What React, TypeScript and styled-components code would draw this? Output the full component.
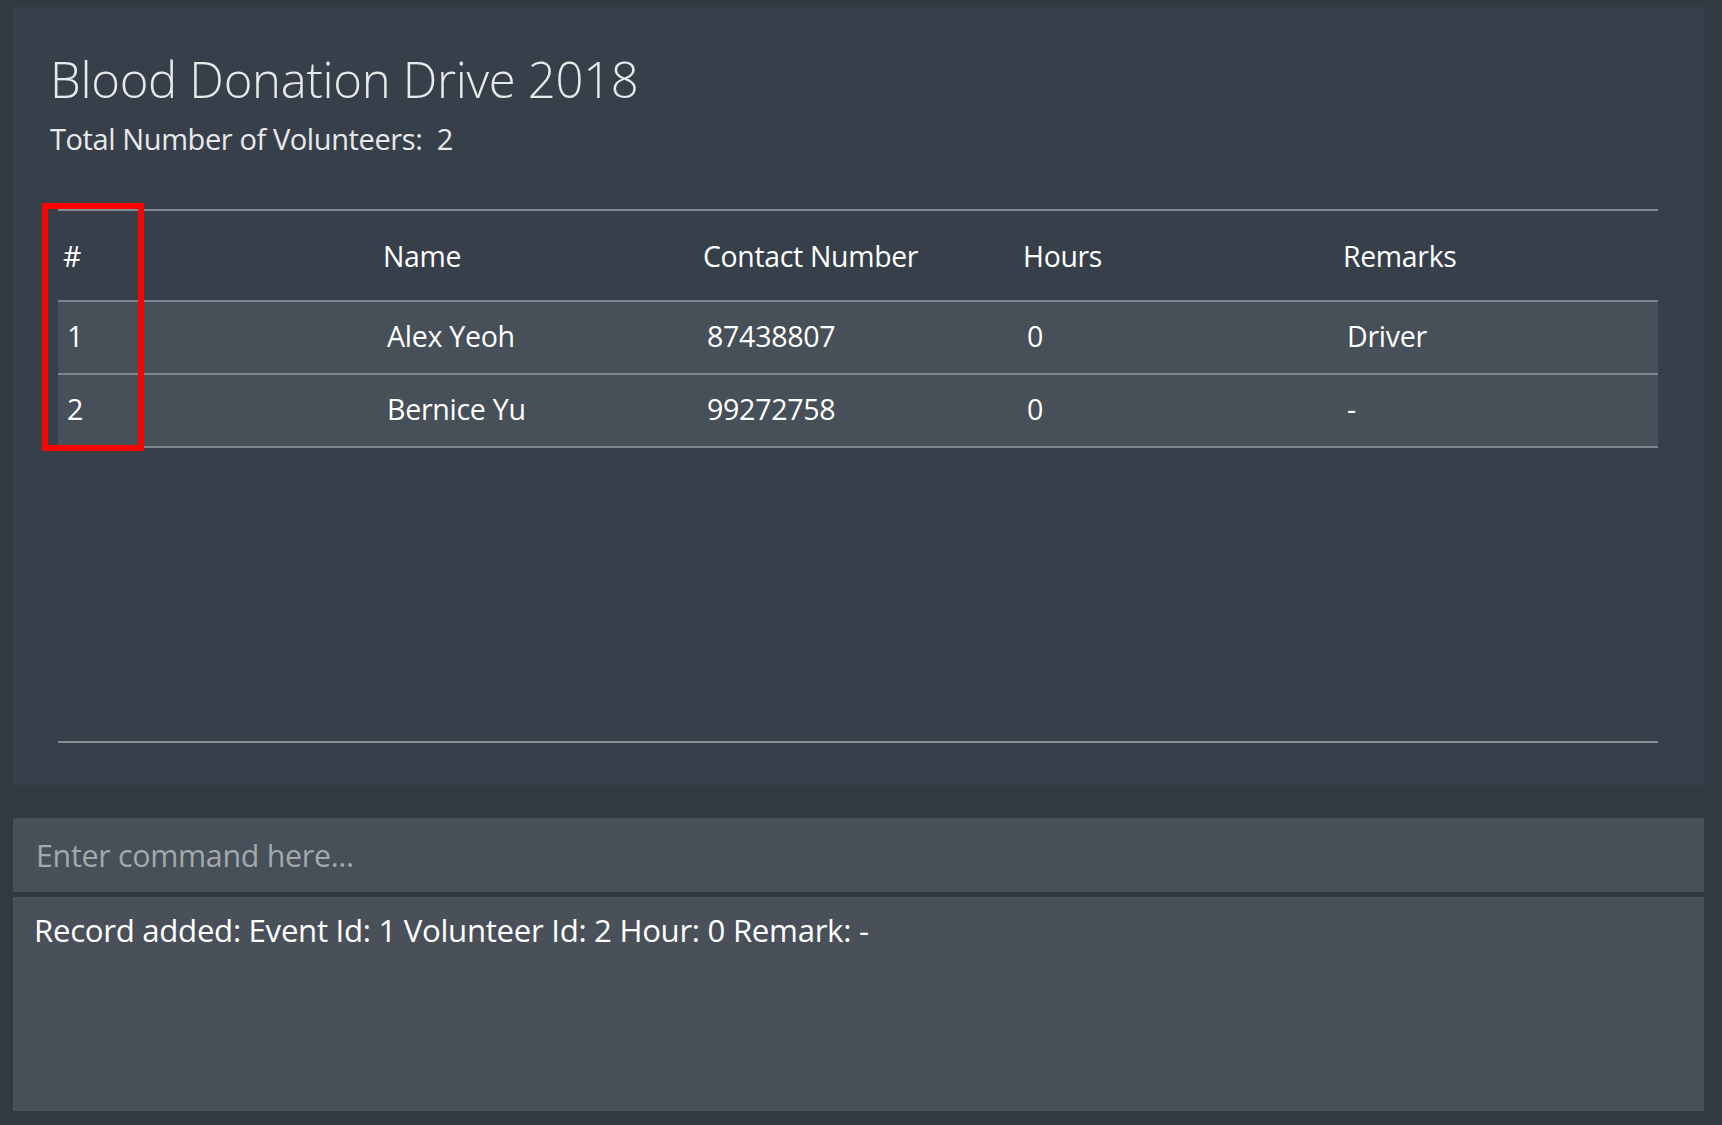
import React from "react";
import styled, { createGlobalStyle } from "styled-components";

const Global = createGlobalStyle`
  html, body { margin: 0; padding: 0; background: #313943; }
  body { font-family: "Open Sans", "Noto Sans", sans-serif; }
`;

const Page = styled.div`
  box-sizing: border-box;
  width: 1722px;
  height: 1125px;
  padding: 7px 18px 14px 13px;
  display: flex;
  flex-direction: column;
  background: #313943;
`;

const EventPanel = styled.section`
  box-sizing: border-box;
  height: 778px;
  background: #37404a;
  padding: 41px 0 0 37px;
  display: flex;
  flex-direction: column;
  position: relative;
`;

const Title = styled.h1`
  margin: 0;
  font-weight: 300;
  font-size: 49px;
  line-height: 62px;
  color: #e8e9ea;
  letter-spacing: -0.3px;
`;

const Subtitle = styled.div`
  margin-top: 9px;
  font-size: 29px;
  line-height: 40px;
  color: #e8e9ea;
  letter-spacing: -0.4px;
`;

const Table = styled.div`
  margin: 50px 0 0 8px;
  width: 1600px;
  height: 534px;
  border-top: 2px solid #808991;
  border-bottom: 2px solid #8a8f94;
  box-sizing: border-box;
`;

const Row = styled.div<{ $header?: boolean }>`
  display: grid;
  grid-template-columns: repeat(5, 320px);
  height: ${(p) => (p.$header ? "91px" : "73px")};
  padding-bottom: ${(p) => (p.$header ? "0" : "4px")};
  align-items: center;
  background: ${(p) => (p.$header ? "transparent" : "#474f58")};
  border-bottom: 2px solid #7d868e;
  box-sizing: border-box;
  color: #ffffff;
  font-size: ${(p) => (p.$header ? "28.4px" : "28.6px")};
  letter-spacing: -0.3px;
`;

const Cell = styled.div<{ $header?: boolean }>`
  padding-left: ${(p) => (p.$header ? "5px" : "9px")};
  white-space: nowrap;
`;

const Highlight = styled.div`
  position: absolute;
  left: 29px;
  top: 196px;
  width: 102px;
  height: 248px;
  border: 6px solid #ff0000;
  box-sizing: border-box;
  pointer-events: none;
`;

const CommandBox = styled.div`
  margin-top: 33px;
  height: 74px;
  box-sizing: border-box;
  background: #474f58;
  display: flex;
  align-items: center;
  padding-left: 23px;
  font-size: 30.4px;
  color: #a3a8ad;
  letter-spacing: -0.3px;
`;

const ResultBox = styled.div`
  margin-top: 5px;
  flex: 1;
  background: #49505a;
  padding: 12px 0 0 21px;
  font-size: 31.2px;
  line-height: 42px;
  color: #ffffff;
  letter-spacing: -0.3px;
`;

const columns = ["#", "Name", "Contact Number", "Hours", "Remarks"];
const rows = [
  ["1", "Alex Yeoh", "87438807", "0", "Driver"],
  ["2", "Bernice Yu", "99272758", "0", "-"],
];

export default function App() {
  return (
    <>
      <Global />
      <Page>
        <EventPanel>
          <Title>Blood Donation Drive 2018</Title>
          <Subtitle>Total Number of Volunteers:&nbsp; 2</Subtitle>
          <Table>
            <Row $header>
              {columns.map((c) => (
                <Cell $header key={c}>{c}</Cell>
              ))}
            </Row>
            {rows.map((r) => (
              <Row key={r[0]}>
                {r.map((v, i) => (
                  <Cell key={i}>{v}</Cell>
                ))}
              </Row>
            ))}
          </Table>
          <Highlight />
        </EventPanel>
        <CommandBox>Enter command here...</CommandBox>
        <ResultBox>Record added: Event Id: 1 Volunteer Id: 2 Hour: 0 Remark: -</ResultBox>
      </Page>
    </>
  );
}
